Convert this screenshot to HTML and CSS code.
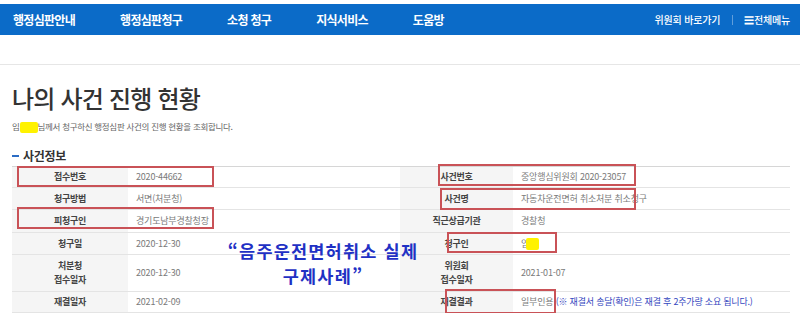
FILE: index.html
```html
<!DOCTYPE html>
<html lang="ko">
<head>
    <meta charset="UTF-8" />
    <meta name="viewport" content="width=device-width, initial-scale=1.0" />
    <title>나의 사건 진행 현황</title>
    <link rel="stylesheet" href="styles.css">
</head>
<body>
<header class="navbar">
    <nav class="menu">
        <a href="#">행정심판안내</a>
        <a href="#">행정심판청구</a>
        <a href="#">소청 청구</a>
        <a href="#">지식서비스</a>
        <a href="#">도움방</a>
    </nav>
    <div class="util">
        <a href="#">위원회 바로가기</a>
        <span class="divider"></span>
        <a href="#" class="allmenu">☰전체메뉴</a>
    </div>
</header>

<div class="sub-top"></div>

<main class="content">
    <h1 class="page-title">나의 사건 진행 현황</h1>
    <p class="page-desc">임<span class="mask">&nbsp;</span>님께서 청구하신 행정심판 사건의 진행 현황을 조회합니다.</p>

    <h2 class="section-title"><span class="dash"></span>사건정보</h2>

    <div class="case-wrap">
        <table class="case-table">
            <tbody>
                <tr class="r1">
                    <th>접수번호</th>
                    <td>2020-44662</td>
                    <th>사건번호</th>
                    <td>중앙행심위원회 2020-23057</td>
                </tr>
                <tr class="r2">
                    <th>청구방법</th>
                    <td>서면(처분청)</td>
                    <th>사건명</th>
                    <td>자동차운전면허 취소처분 취소청구</td>
                </tr>
                <tr class="r3">
                    <th>피청구인</th>
                    <td>경기도남부경찰청장</td>
                    <th>직근상급기관</th>
                    <td>경찰청</td>
                </tr>
                <tr class="r4">
                    <th>청구일</th>
                    <td>2020-12-30</td>
                    <th>청구인</th>
                    <td>임<span class="mask small">&nbsp;</span></td>
                </tr>
                <tr class="r5">
                    <th>처분청<br>접수일자</th>
                    <td>2020-12-30</td>
                    <th>위원회<br>접수일자</th>
                    <td>2021-01-07</td>
                </tr>
                <tr class="r6">
                    <th>재결일자</th>
                    <td>2021-02-09</td>
                    <th>재결결과</th>
                    <td>일부인용 <span class="notice">(※ 재결서 송달(확인)은 재결 후 2주가량 소요 됩니다.)</span></td>
                </tr>
            </tbody>
        </table>

        <!-- 강조 표시 -->
        <span class="mark m1"></span>
        <span class="mark m2"></span>
        <span class="mark m3"></span>
        <span class="mark m4"></span>
        <span class="mark m5"></span>
        <span class="mark m6"></span>

        <p class="caption">“음주운전면허취소 실제<br>구제사례”</p>
    </div>
</main>
</body>
</html>
```

FILE: styles.css
```css
* {
    box-sizing: border-box;
}
body {
    font-family: "Noto Sans CJK KR", "Noto Sans", sans-serif;
    margin: 0;
    padding: 0;
    background-color: #fff;
    color: #333;
    width: 800px;
    overflow: hidden;
}
header.navbar {
    margin-top: 4px;
    height: 31px;
    background-color: #0b6bc8;
    display: flex;
    align-items: center;
    justify-content: space-between;
    padding: 0 10px 0 13px;
}
.menu {
    display: flex;
    gap: 45px;
}
.menu a {
    color: #fff;
    text-decoration: none;
    font-size: 12px;
    font-weight: bold;
    letter-spacing: -0.7px;
}
.util {
    display: flex;
    align-items: center;
}
.util a {
    color: #fff;
    text-decoration: none;
    font-size: 10px;
    font-weight: 500;
    letter-spacing: -0.2px;
}
.util .divider {
    width: 1px;
    height: 10px;
    background-color: rgba(255, 255, 255, 0.35);
    margin: 0 11px 0 12px;
}
.sub-top {
    height: 30px;
    border-bottom: 1px solid #e6e6e6;
}
.content {
    padding: 0 10px 0 12px;
}
.page-title {
    margin: 17px 0 0;
    font-size: 24px;
    line-height: 31px;
    font-weight: 500;
    letter-spacing: -0.8px;
    color: #333;
}
.page-desc {
    margin: 6px 0 0;
    font-size: 8.5px;
    line-height: 14px;
    color: #666;
    letter-spacing: -0.3px;
}
.mask {
    display: inline-block;
    width: 18px;
    height: 11px;
    vertical-align: middle;
    background-color: #fff200;
    border-radius: 2px;
}
.mask.small {
    width: 13px;
    height: 12px;
    margin-left: -3px;
}
.section-title {
    margin: 15px 0 0;
    font-size: 12px;
    line-height: 16px;
    font-weight: bold;
    color: #333;
    display: flex;
    align-items: center;
    letter-spacing: -0.3px;
}
.section-title .dash {
    width: 7px;
    height: 2px;
    background-color: #2b6cc4;
    margin-right: 4px;
}
.case-wrap {
    position: relative;
    margin-top: 2px;
}
.case-table {
    width: 778px;
    border-collapse: collapse;
    table-layout: fixed;
    font-size: 9px;
    border-top: 1px solid #d6d6d6;
}
.case-table th,
.case-table td {
    padding: 0;
    border-bottom: 1px solid #e4e4e4;
    line-height: 14px;
}
.case-table th {
    background-color: #f5f5f5;
    color: #444;
    font-weight: bold;
    text-align: center;
    letter-spacing: -0.3px;
}
.case-table td {
    color: #7a7a7a;
    padding-left: 8px;
    letter-spacing: -0.2px;
}
.case-table tr th:nth-child(1) { width: 116px; }
.case-table tr td:nth-child(2) { width: 272px; }
.case-table tr th:nth-child(3) { width: 113px; }
.case-table .r1 th, .case-table .r1 td { height: 21px; }
.case-table .r2 th, .case-table .r2 td { height: 22px; }
.case-table .r3 th, .case-table .r3 td { height: 23px; }
.case-table .r4 th, .case-table .r4 td { height: 22px; }
.case-table .r5 th, .case-table .r5 td { height: 37px; }
.case-table .r6 th, .case-table .r6 td { height: 21px; }
.notice {
    color: #3346c0;
}
.mark {
    position: absolute;
    border: 2px solid #c95257;
}
.m1 { left: 5px; top: 0; width: 197px; height: 21px; }
.m2 { left: 5px; top: 41px; width: 197px; height: 22px; }
.m3 { left: 426px; top: -2px; width: 198px; height: 22px; }
.m4 { left: 428px; top: 22px; width: 196px; height: 22px; }
.m5 { left: 435px; top: 66px; width: 110px; height: 21px; }
.m6 { left: 433px; top: 123px; width: 111px; height: 25px; }
.caption {
    position: absolute;
    left: 186px;
    top: 72px;
    width: 250px;
    margin: 0;
    text-align: center;
    font-size: 17.5px;
    line-height: 25px;
    font-weight: bold;
    letter-spacing: 1.2px;
    color: #1f31c4;
}
```
